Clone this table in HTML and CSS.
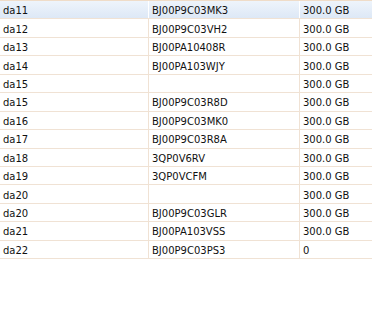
FILE: index.html
```html
<!DOCTYPE html>
<html>
<head>
<meta charset="utf-8">
<link rel="stylesheet" href="styles.css">
</head>
<body>
<div class="grid">
  <div class="row sel"><div class="c c1">da11</div><div class="c c2">BJ00P9C03MK3</div><div class="c c3">300.0 GB</div></div>
  <div class="row"><div class="c c1">da12</div><div class="c c2">BJ00P9C03VH2</div><div class="c c3">300.0 GB</div></div>
  <div class="row"><div class="c c1">da13</div><div class="c c2">BJ00PA10408R</div><div class="c c3">300.0 GB</div></div>
  <div class="row"><div class="c c1">da14</div><div class="c c2">BJ00PA103WJY</div><div class="c c3">300.0 GB</div></div>
  <div class="row"><div class="c c1">da15</div><div class="c c2"></div><div class="c c3">300.0 GB</div></div>
  <div class="row"><div class="c c1">da15</div><div class="c c2">BJ00P9C03R8D</div><div class="c c3">300.0 GB</div></div>
  <div class="row"><div class="c c1">da16</div><div class="c c2">BJ00P9C03MK0</div><div class="c c3">300.0 GB</div></div>
  <div class="row"><div class="c c1">da17</div><div class="c c2">BJ00P9C03R8A</div><div class="c c3">300.0 GB</div></div>
  <div class="row"><div class="c c1">da18</div><div class="c c2">3QP0V6RV</div><div class="c c3">300.0 GB</div></div>
  <div class="row"><div class="c c1">da19</div><div class="c c2">3QP0VCFM</div><div class="c c3">300.0 GB</div></div>
  <div class="row"><div class="c c1">da20</div><div class="c c2"></div><div class="c c3">300.0 GB</div></div>
  <div class="row"><div class="c c1">da20</div><div class="c c2">BJ00P9C03GLR</div><div class="c c3">300.0 GB</div></div>
  <div class="row"><div class="c c1">da21</div><div class="c c2">BJ00PA103VSS</div><div class="c c3">300.0 GB</div></div>
  <div class="row"><div class="c c1">da22</div><div class="c c2">BJ00P9C03PS3</div><div class="c c3">0</div></div>
</div>
</body>
</html>
```
FILE: styles.css
```css
html, body { margin: 0; padding: 0; background: #fff; }
.grid {
  width: 372px;
  font-family: "DejaVu Sans", Verdana, sans-serif;
  font-size: 10px;
  color: #111;
  border-top: 1px solid #efdcc8;
}
.row {
  display: grid;
  grid-template-columns: 149px 151px 1fr;
  height: 18.45px;
  box-sizing: border-box;
  border-bottom: 1px solid #f0e2d4;
}
.row.sel {
  background: linear-gradient(#eef4fb, #dde8f6);
}
.c {
  padding-left: 3px;
  padding-top: 2px;
  box-sizing: border-box;
  display: flex;
  align-items: center;
  white-space: nowrap;
  overflow: hidden;
}
.c1, .c2 { border-right: 1px solid #f0e2d4; }
.row.sel .c1, .row.sel .c2 { border-right-color: #fff; }
```
